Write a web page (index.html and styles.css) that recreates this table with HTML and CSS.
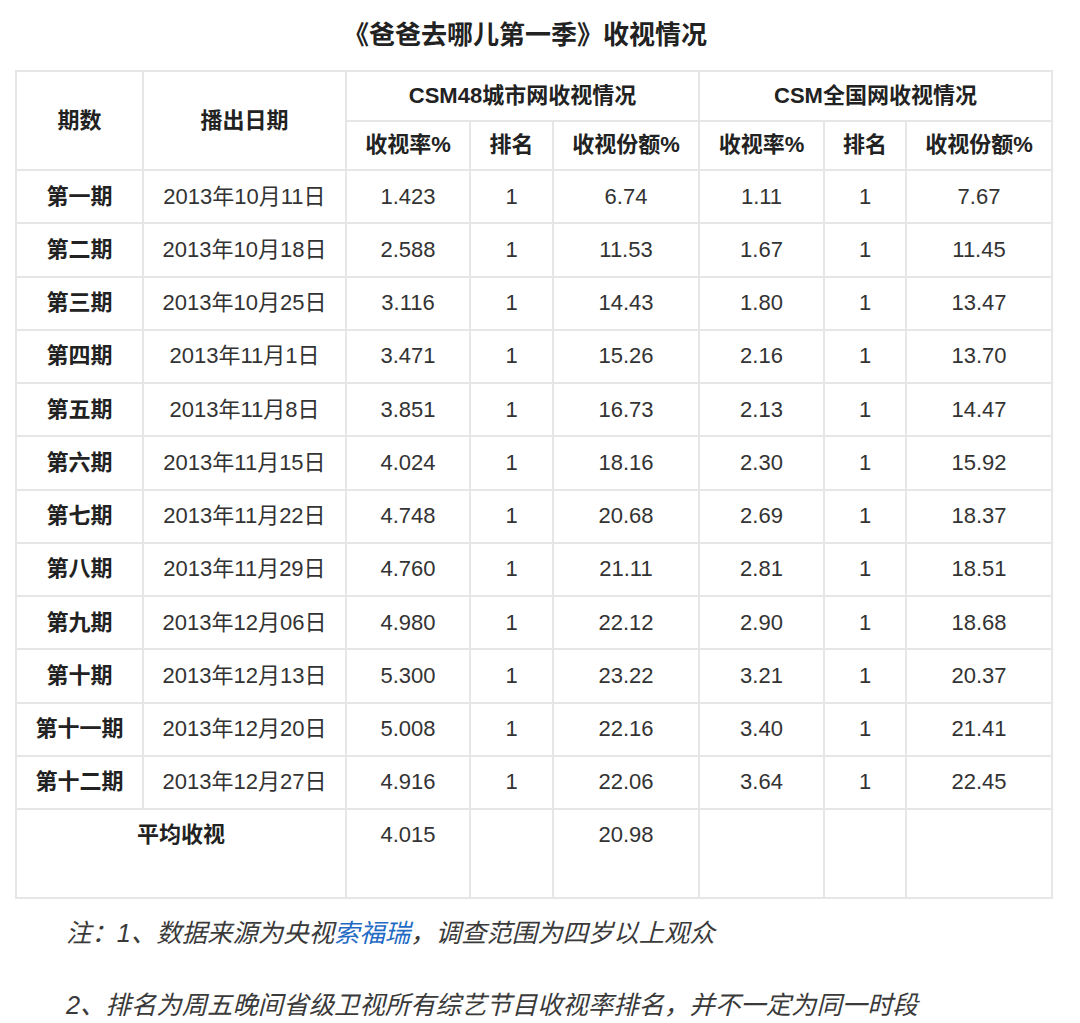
FILE: index.html
```html
<!DOCTYPE html>
<html lang="zh-CN">
<head>
<meta charset="utf-8">
<title>《爸爸去哪儿第一季》收视情况</title>
<link rel="stylesheet" href="styles.css">
</head>
<body>
<div class="page">
  <h1 class="title">《爸爸去哪儿第一季》收视情况</h1>
  <table class="ratings">
    <colgroup>
      <col class="c-ep">
      <col class="c-date">
      <col class="c-rate">
      <col class="c-rank">
      <col class="c-share">
      <col class="c-rate2">
      <col class="c-rank2">
      <col class="c-share2">
    </colgroup>
    <thead>
      <tr class="head-row">
        <th rowspan="2">期数</th>
        <th rowspan="2">播出日期</th>
        <th colspan="3">CSM48城市网收视情况</th>
        <th colspan="3">CSM全国网收视情况</th>
      </tr>
      <tr class="head-row">
        <th>收视率%</th>
        <th>排名</th>
        <th>收视份额%</th>
        <th>收视率%</th>
        <th>排名</th>
        <th>收视份额%</th>
      </tr>
    </thead>
    <tbody>
      <tr><th>第一期</th><td>2013年10月11日</td><td>1.423</td><td>1</td><td>6.74</td><td>1.11</td><td>1</td><td>7.67</td></tr>
      <tr><th>第二期</th><td>2013年10月18日</td><td>2.588</td><td>1</td><td>11.53</td><td>1.67</td><td>1</td><td>11.45</td></tr>
      <tr><th>第三期</th><td>2013年10月25日</td><td>3.116</td><td>1</td><td>14.43</td><td>1.80</td><td>1</td><td>13.47</td></tr>
      <tr><th>第四期</th><td>2013年11月1日</td><td>3.471</td><td>1</td><td>15.26</td><td>2.16</td><td>1</td><td>13.70</td></tr>
      <tr><th>第五期</th><td>2013年11月8日</td><td>3.851</td><td>1</td><td>16.73</td><td>2.13</td><td>1</td><td>14.47</td></tr>
      <tr><th>第六期</th><td>2013年11月15日</td><td>4.024</td><td>1</td><td>18.16</td><td>2.30</td><td>1</td><td>15.92</td></tr>
      <tr><th>第七期</th><td>2013年11月22日</td><td>4.748</td><td>1</td><td>20.68</td><td>2.69</td><td>1</td><td>18.37</td></tr>
      <tr><th>第八期</th><td>2013年11月29日</td><td>4.760</td><td>1</td><td>21.11</td><td>2.81</td><td>1</td><td>18.51</td></tr>
      <tr><th>第九期</th><td>2013年12月06日</td><td>4.980</td><td>1</td><td>22.12</td><td>2.90</td><td>1</td><td>18.68</td></tr>
      <tr><th>第十期</th><td>2013年12月13日</td><td>5.300</td><td>1</td><td>23.22</td><td>3.21</td><td>1</td><td>20.37</td></tr>
      <tr><th>第十一期</th><td>2013年12月20日</td><td>5.008</td><td>1</td><td>22.16</td><td>3.40</td><td>1</td><td>21.41</td></tr>
      <tr><th>第十二期</th><td>2013年12月27日</td><td>4.916</td><td>1</td><td>22.06</td><td>3.64</td><td>1</td><td>22.45</td></tr>
      <tr class="avg-row"><th colspan="2">平均收视</th><td>4.015</td><td></td><td>20.98</td><td></td><td></td><td></td></tr>
    </tbody>
  </table>
  <p class="note">注：1、数据来源为央视<a class="link" href="#">索福瑞</a>，调查范围为四岁以上观众</p>
  <p class="note">2、排名为周五晚间省级卫视所有综艺节目收视率排名，并不一定为同一时段</p>
</div>
</body>
</html>
```

FILE: styles.css
```css
html, body {
  margin: 0;
  padding: 0;
  background: #ffffff;
}

body {
  font-family: "Liberation Sans", "Noto Sans CJK SC", sans-serif;
  color: #333333;
}

.page {
  width: 1038px;
  margin-left: 15px;
}

.title {
  margin: 0 0 17px 0;
  padding: 17px 18px 0 0;
  font-size: 26px;
  line-height: 36px;
  font-weight: bold;
  color: #222222;
  text-align: center;
}

.ratings {
  width: 1038px;
  table-layout: fixed;
  border-collapse: collapse;
  border: 2px solid #e6e6e6;
  font-size: 22px;
}

.c-ep { width: 127px; }
.c-date { width: 203px; }
.c-rate { width: 124px; }
.c-rank { width: 83px; }
.c-share { width: 146px; }
.c-rate2 { width: 125px; }
.c-rank2 { width: 82px; }
.c-share2 { width: 146px; }

.ratings th,
.ratings td {
  border: 2px solid #e6e6e6;
  padding: 0;
  text-align: center;
  vertical-align: middle;
  line-height: 30px;
  white-space: nowrap;
}

.ratings th {
  font-weight: bold;
  color: #222222;
}

.ratings td {
  color: #333333;
}

.head-row {
  height: 49.5px;
}

.ratings tbody tr {
  height: 53.25px;
}

.ratings tbody tr.avg-row {
  height: 89px;
}

.avg-row th,
.avg-row td {
  vertical-align: top;
  padding-top: 10px;
}

.note {
  margin: 0;
  font-size: 25.4px;
  line-height: 36px;
  font-style: italic;
  color: #3a3a3a;
  text-indent: 51px;
}

.note:first-of-type {
  margin-top: 16px;
}

.note + .note {
  margin-top: 36px;
}

.link {
  color: #1f6bc4;
  text-decoration: none;
}
```
